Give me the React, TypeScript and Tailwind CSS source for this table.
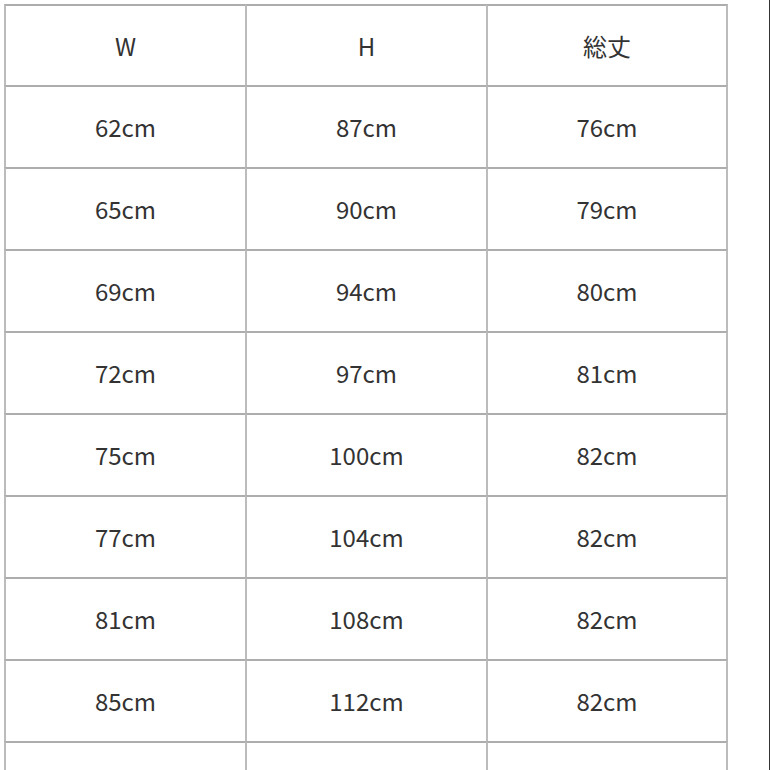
const header = ['W', 'H', '総丈'];

const rows: string[][] = [
  ['62cm', '87cm', '76cm'],
  ['65cm', '90cm', '79cm'],
  ['69cm', '94cm', '80cm'],
  ['72cm', '97cm', '81cm'],
  ['75cm', '100cm', '82cm'],
  ['77cm', '104cm', '82cm'],
  ['81cm', '108cm', '82cm'],
  ['85cm', '112cm', '82cm'],
  ['', '', ''],
];

function Row({ cells, tall }: { cells: string[]; tall?: boolean }) {
  return (
    <div className={`flex ${tall ? 'h-[81px]' : 'h-[82px]'} shrink-0`}>
      {cells.map((c, i) => (
        <div
          key={i}
          className={`shrink-0 flex items-center justify-center border-t-2 border-l-2 border-t-[#adadad] border-l-[#bcbcbc] ${
            i === 2 ? 'w-[242px] border-r-2 border-r-[#bcbcbc]' : 'w-[241px]'
          }`}
        >
          <span className="text-[24px] text-[#333]">{c}</span>
        </div>
      ))}
    </div>
  );
}

export default function App() {
  return (
    <div
      className="w-[770px] h-[770px] overflow-hidden bg-white border-r border-r-[#333] flex flex-col pt-[4px] pl-[4px]"
      style={{ fontFamily: '"Noto Sans CJK JP", "Noto Sans", sans-serif' }}
    >
      <Row cells={header} tall />
      {rows.map((r, i) => (
        <Row key={i} cells={r} />
      ))}
    </div>
  );
}
